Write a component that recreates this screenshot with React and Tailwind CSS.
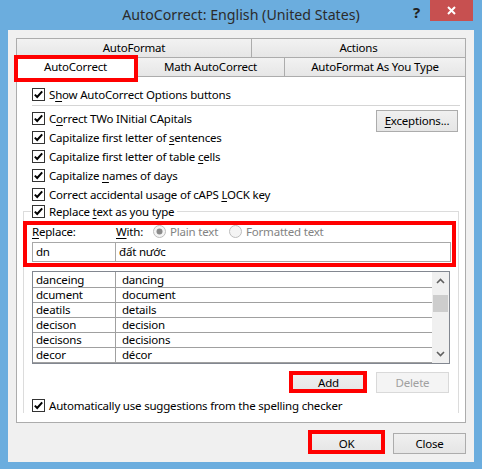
import React from 'react';

const U = ({ children }) => <span className="underline underline-offset-[2px]">{children}</span>;

function CheckBox() {
    return (
        <svg width="13" height="13" viewBox="0 0 13 13" className="shrink-0">
            <rect x="0.5" y="0.5" width="12" height="12" fill="#fff" stroke="#333" />
            <path d="M2.8 6.6 L5.2 9 L10.2 3.4" fill="none" stroke="#000" strokeWidth="2" />
        </svg>
    );
}

function Check({ children }) {
    return (
        <div className="flex items-center h-[19px]">
            <CheckBox />
            <span className="ml-[4px] whitespace-nowrap">{children}</span>
        </div>
    );
}

function Radio({ checked }) {
    return (
        <svg width="13" height="13" viewBox="0 0 13 13" className="shrink-0">
            <circle cx="6.5" cy="6.5" r="6" fill="#f4f4f4" stroke="#bcbcbc" />
            {checked && <circle cx="6.5" cy="6.5" r="3" fill="#8a8a8a" />}
        </svg>
    );
}

function Btn({ children, className, disabled }) {
    const look = disabled
        ? 'border-[#d9d9d9] bg-[#f4f4f4] text-[#a0a0a0]'
        : 'border-[#acacac] bg-linear-to-b from-[#f0f0f0] to-[#e5e5e5] text-black';
    return (
        <div className={`flex items-center justify-center border ${look} ${className}`}>
            {children}
        </div>
    );
}

const rows = [
    ['danceing', 'dancing'],
    ['dcument', 'document'],
    ['deatils', 'details'],
    ['decison', 'decision'],
    ['decisons', 'decisions'],
    ['decor', 'décor'],
];

export default function App() {
    return (
        <div className="w-[482px] h-[469px] bg-[#6badde] flex flex-col font-['Segoe_UI','Noto_Sans',sans-serif] text-[11.5px] tracking-[-0.2px] text-black">
            {/* title bar */}
            <div className="h-[30px] grid grid-cols-[1fr_auto_1fr] items-start">
                <div />
                <div className="text-[14.2px] tracking-normal leading-[30px] text-[#2b2b2b] whitespace-nowrap">
                    AutoCorrect: English (United States)
                </div>
                <div className="flex justify-end items-start">
                    <span className="mt-[3px] mr-[10px] text-[15px] font-bold leading-[18px] text-[#222]">?</span>
                    <div className="w-[43px] h-[21px] mr-[9px] bg-[#c75050] flex items-center justify-center">
                        <svg width="9" height="9" viewBox="0 0 9 9">
                            <path d="M1 1 L8 8 M8 1 L1 8" stroke="#fff" strokeWidth="2" />
                        </svg>
                    </div>
                </div>
            </div>

            {/* client */}
            <div className="mx-[8px] h-[432px] bg-[#f0f0f0] pt-[8px] px-[8px] flex flex-col">
                {/* tabs */}
                <div className="w-[450px] flex h-[19px]">
                    <div className="w-[236px] border border-b-0 border-[#acacac] bg-linear-to-b from-[#f2f2f2] to-[#e6e6e6] flex items-center justify-center">
                        AutoFormat
                    </div>
                    <div className="flex-1 -ml-px border border-b-0 border-[#acacac] bg-linear-to-b from-[#f2f2f2] to-[#e6e6e6] flex items-center justify-center">
                        Actions
                    </div>
                </div>
                <div className="w-[450px] flex h-[19px] items-start">
                    <div className="relative z-10 w-[123px] h-[22px] -ml-[2px] -mt-[2px] bg-white border border-b-0 border-[#acacac] flex items-center justify-center">
                        AutoCorrect
                        <div className="absolute left-[-1px] top-[-1px] w-[124px] h-[27px] border-4 border-[#ff0000]" />
                    </div>
                    <div className="w-[148px] h-[19px] border border-b-0 border-l-0 border-[#acacac] bg-linear-to-b from-[#f2f2f2] to-[#e6e6e6] flex items-center justify-center">
                        Math AutoCorrect
                    </div>
                    <div className="flex-1 h-[19px] border border-b-0 border-l-0 border-[#acacac] bg-linear-to-b from-[#f2f2f2] to-[#e6e6e6] flex items-center justify-center">
                        AutoFormat As You Type
                    </div>
                </div>

                {/* tab page */}
                <div className="w-[450px] h-[347px] bg-white border border-[#acacac] pt-[8px] flex flex-col">
                    <div className="pl-[15px]">
                        <Check>S<U>h</U>ow AutoCorrect Options buttons</Check>
                    </div>
                    <div className="ml-[15px] mr-[5px] mt-[1px] h-px bg-[#d5d5d5]" />
                    <div className="mt-[3px] pl-[15px] pr-[7px] flex justify-between items-start">
                        <div>
                            <Check>C<U>o</U>rrect TWo INitial CApitals</Check>
                            <Check>Capitalize first letter of <U>s</U>entences</Check>
                            <Check>Capitalize first letter of table <U>c</U>ells</Check>
                            <Check>Capitalize <U>n</U>ames of days</Check>
                            <Check>Correct accidental usage of cAPS <U>L</U>OCK key</Check>
                        </div>
                        <Btn className="w-[82px] h-[22px] mt-[1px]">
                            <span><U>E</U>xceptions...</span>
                        </Btn>
                    </div>

                    {/* replace group */}
                    <div className="mt-[7px] mx-[6px] h-[202px] border border-b-0 border-[#dcdcdc] flex flex-col">
                        <div className="-mt-[10px] ml-[7px] w-fit bg-white pl-[1px] pr-[3px]">
                            <Check>Replace <U>t</U>ext as you type</Check>
                        </div>

                        <div className="relative mt-[1px] pl-[8px]">
                            <div className="flex items-center h-[19px]">
                                <span className="w-[84px]"><U>R</U>eplace:</span>
                                <span className="w-[37px]"><U>W</U>ith:</span>
                                <Radio checked />
                                <span className="ml-[4px] w-[59px] text-[#838383]">Plain text</span>
                                <Radio />
                                <span className="ml-[4px] text-[#838383]">Formatted text</span>
                            </div>
                            <div className="flex mt-[1px] h-[20px]">
                                <div className="w-[84px] border border-[#a8a8a8] pl-[3px] flex items-center">dn</div>
                                <div className="w-[335px] border border-l-0 border-[#a8a8a8] pl-[3px] flex items-center">đất nước</div>
                            </div>
                            <div className="absolute left-[-1px] top-[-1px] w-[433px] h-[46px] border-4 border-[#ff0000]" />
                        </div>

                        {/* list */}
                        <div className="mt-[9px] ml-[8px] w-[418px] h-[94px] border border-[#828790] flex">
                            <div className="w-[399px] pt-[1px] relative">
                                <div className="absolute left-[82px] top-0 bottom-0 w-px bg-[#a0a0a0]" />
                                {rows.map(([a, b]) => (
                                    <div key={a} className="flex h-[15px] border-b border-[#a0a0a0] leading-[14px]">
                                        <div className="w-[83px] pl-[3px]">{a}</div>
                                        <div className="flex-1 pl-[6px]">{b}</div>
                                    </div>
                                ))}
                            </div>
                            <div className="flex-1 bg-[#f0f0f0] flex flex-col items-center">
                                <svg width="9" height="6" viewBox="0 0 9 6" className="mt-[6px]">
                                    <path d="M1 5 L4.5 1.5 L8 5" fill="none" stroke="#606060" strokeWidth="1.6" />
                                </svg>
                                <div className="mt-[11px] w-[15px] h-[17px] bg-[#cdcdcd]" />
                                <div className="flex-1" />
                                <svg width="9" height="6" viewBox="0 0 9 6" className="mb-[6px]">
                                    <path d="M1 1 L4.5 4.5 L8 1" fill="none" stroke="#606060" strokeWidth="1.6" />
                                </svg>
                            </div>
                        </div>

                        <div className="mt-[8px] pr-[9px] flex justify-end">
                            <div className="relative mr-[10px]">
                                <Btn className="w-[75px] h-[21px]">
                                    <span><U>A</U>dd</span>
                                </Btn>
                                <div className="absolute left-[-2px] top-[-1px] w-[78px] h-[22px] border-4 border-[#ff0000]" />
                            </div>
                            <Btn disabled className="w-[73px] h-[21px]">Delete</Btn>
                        </div>

                        <div className="mt-[3px] pl-[8px]">
                            <Check>Automatically use su<U>g</U>gestions from the spelling checker</Check>
                        </div>
                    </div>
                </div>

                <div className="mt-[10px] flex justify-end">
                    <div className="relative mr-[10px]">
                        <Btn className="w-[73px] h-[21px]">OK</Btn>
                        <div className="absolute left-[-2px] top-[-3px] w-[77px] h-[24px] border-4 border-[#ff0000]" />
                    </div>
                    <Btn className="w-[73px] h-[21px]">Close</Btn>
                </div>
            </div>
        </div>
    );
}
